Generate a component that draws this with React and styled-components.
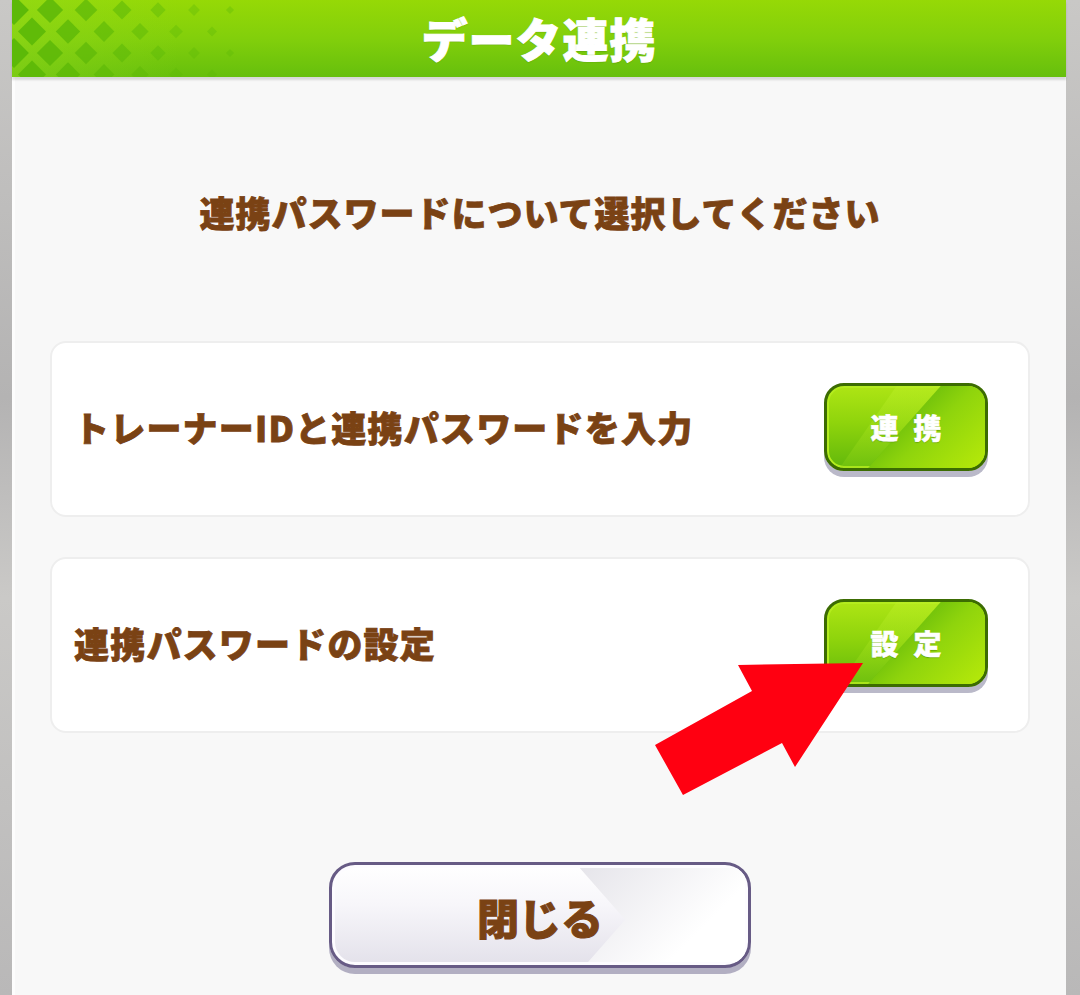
import styled, { createGlobalStyle } from "styled-components";

const GlobalStyle = createGlobalStyle`
    html, body {
        margin: 0;
        padding: 0;
        background: #bdbcbc;
    }
    * {
        box-sizing: border-box;
    }
`

// diamonds in the header's left corner, shrinking toward the right
const diamonds = [];
for (let r = 0; r < 5; r++) {
    for (let c = 0; c < 7; c++) {
        const x = 2 + c * 36 + (r % 2 ? 18 : 0);
        const y = 10 + r * 21.5;
        const s = Math.max(0, 15 - x * 0.05);
        if (x > 230 || s < 3) continue;
        diamonds.push({ x, y, s, o: Math.max(0.35, 1 - x / 260) });
    }
}

const HeaderPattern = () => (
    <SPattern width="240" height="77" viewBox="0 0 240 77">
        <defs>
            <linearGradient id="fade" x1="0" x2="1" y1="0" y2="0">
                <stop offset="0" stopColor="#8fd81c" stopOpacity="0.9" />
                <stop offset="0.7" stopColor="#8fd81c" stopOpacity="0" />
            </linearGradient>
        </defs>
        <rect x="0" y="0" width="240" height="77" fill="url(#fade)" opacity="0.55" />
        {diamonds.map((d, i) => (
            <polygon
                key={i}
                points={`${d.x},${d.y - d.s} ${d.x + d.s},${d.y} ${d.x},${d.y + d.s} ${d.x - d.s},${d.y}`}
                fill="#5cb808"
                opacity={d.o}
            />
        ))}
    </SPattern>
)

const Arrow = () => (
    <SArrow width="1080" height="995" viewBox="0 0 1080 995">
        <polygon
            points="863,663 738,665 752,691 655,745 683,795 782,743 795,767"
            fill="#ff0011"
        />
    </SArrow>
)

const Option = ({ label, action }) => (
    <SCard>
        <SCardText>{label}</SCardText>
        <SGreenButton>
            <span>{action}</span>
        </SGreenButton>
    </SCard>
)

export default function App() {
    return (
        <SPage>
            <GlobalStyle />
            <SPanel>
                <SHeader>
                    <HeaderPattern />
                    <STitle>データ連携</STitle>
                </SHeader>
                <SBody>
                    <SLead>連携パスワードについて選択してください</SLead>
                    <SOptions>
                        <Option label="トレーナーIDと連携パスワードを入力" action="連携" />
                        <Option label="連携パスワードの設定" action="設定" />
                    </SOptions>
                    <SCloseButton>
                        <span>閉じる</span>
                    </SCloseButton>
                </SBody>
            </SPanel>
            <Arrow />
        </SPage>
    )
}

const SPage = styled.div`
    position: relative;
    width: 1080px;
    height: 995px;
    overflow: hidden;
    display: flex;
    padding: 0 14px 0 12px;
    background: linear-gradient(180deg, #c9c8c6 0%, #b4b3b3 40%, #cac9c7 60%, #b9b8b8 100%);
    font-family: "Noto Sans CJK JP", "Noto Sans", sans-serif;
`

const SPanel = styled.div`
    flex: 1;
    display: flex;
    flex-direction: column;
    background: #f8f8f8;
    border-left: 3px solid #fdfdfd;
`

const SHeader = styled.header`
    position: relative;
    height: 77px;
    margin-left: -3px;
    display: flex;
    align-items: center;
    justify-content: center;
    background: linear-gradient(180deg, #96d906 0%, #82cf0b 50%, #66bf0d 100%);
    box-shadow: 0 3px 2px rgba(0, 0, 0, 0.13);
    z-index: 1;
`

const SPattern = styled.svg`
    position: absolute;
    left: 0;
    top: 0;
`

const STitle = styled.h1`
    position: relative;
    margin: 0 0 4px 0;
    color: #fff;
    font-size: 46px;
    font-weight: 900;
    letter-spacing: 1px;
    -webkit-text-stroke: 1px #fff;
    text-shadow: 0 1px 1px rgba(40, 90, 0, 0.35);
`

const SBody = styled.div`
    display: flex;
    flex-direction: column;
    align-items: center;
    padding: 113px 36px 0 35px;
`

const SLead = styled.p`
    margin: 0;
    height: 44px;
    line-height: 44px;
    color: #7a4214;
    font-size: 35px;
    font-weight: 900;
    letter-spacing: 1px;
    -webkit-text-stroke: 0.8px #7a4214;
`

const SOptions = styled.div`
    align-self: stretch;
    display: flex;
    flex-direction: column;
    gap: 40px;
    margin-top: 107px;
`

const SCard = styled.div`
    height: 176px;
    display: flex;
    align-items: center;
    justify-content: space-between;
    padding: 0 40px 0 22px;
    background: #fff;
    border: 2px solid #eeeeee;
    border-radius: 16px;
`

const SCardText = styled.span`
    color: #7a4214;
    font-size: 35px;
    font-weight: 900;
    letter-spacing: 1.2px;
    -webkit-text-stroke: 0.8px #7a4214;
    margin-bottom: 6px;
`

const SGreenButton = styled.div`
    position: relative;
    width: 164px;
    height: 88px;
    margin-top: -4px;
    display: flex;
    align-items: center;
    justify-content: center;
    border: 3px solid #3c6c02;
    border-radius: 20px;
    overflow: hidden;
    background: linear-gradient(180deg, #aee514 0%, #8fd40c 45%, #62b80c 100%);
    box-shadow: 0 6px 0 #bab9c9, inset 0 0 0 2px #b4ec1e;

    &::before {
        content: "";
        position: absolute;
        inset: 0;
        clip-path: polygon(44% 0, 72% 0, 26% 100%, 8% 100%);
        background: linear-gradient(180deg, rgba(190, 240, 40, 0.45), rgba(140, 210, 20, 0.3));
    }

    &::after {
        content: "";
        position: absolute;
        inset: 0;
        clip-path: polygon(72% 0, 100% 0, 100% 100%, 26% 100%);
        background: linear-gradient(135deg, #5fb60b 35%, #8fd40c 62%, #b2e70a 95%);
    }

    span {
        position: relative;
        z-index: 1;
        color: #fff;
        font-size: 28px;
        font-weight: 900;
        letter-spacing: 15px;
        padding-left: 15px;
        -webkit-text-stroke: 0.6px #fff;
        text-shadow: 0 1px 1px rgba(40, 90, 0, 0.4);
    }
`

const SCloseButton = styled.div`
    position: relative;
    width: 422px;
    height: 106px;
    margin-top: 129px;
    display: flex;
    align-items: center;
    justify-content: center;
    border: 3px solid #675b85;
    border-radius: 26px;
    overflow: hidden;
    background: linear-gradient(180deg, #ffffff 0%, #f7f6fa 40%, #e3e1ea 100%);
    box-shadow: 0 6px 0 #b2afc2, inset 0 0 0 3px #fdfcff;

    &::after {
        content: "";
        position: absolute;
        top: 3px;
        bottom: 3px;
        right: 3px;
        left: 0;
        clip-path: polygon(60% 0, 100% 0, 100% 100%, 62% 100%, 71% 55%);
        background: linear-gradient(135deg, #f1f0f4 20%, #e3e2e8 45%, #ffffff 85%);
    }

    span {
        position: relative;
        z-index: 1;
        color: #7a4214;
        font-size: 42px;
        font-weight: 900;
        -webkit-text-stroke: 1px #7a4214;
        margin-top: 2px;
    }
`

const SArrow = styled.svg`
    position: absolute;
    left: 0;
    top: 0;
    pointer-events: none;
`
